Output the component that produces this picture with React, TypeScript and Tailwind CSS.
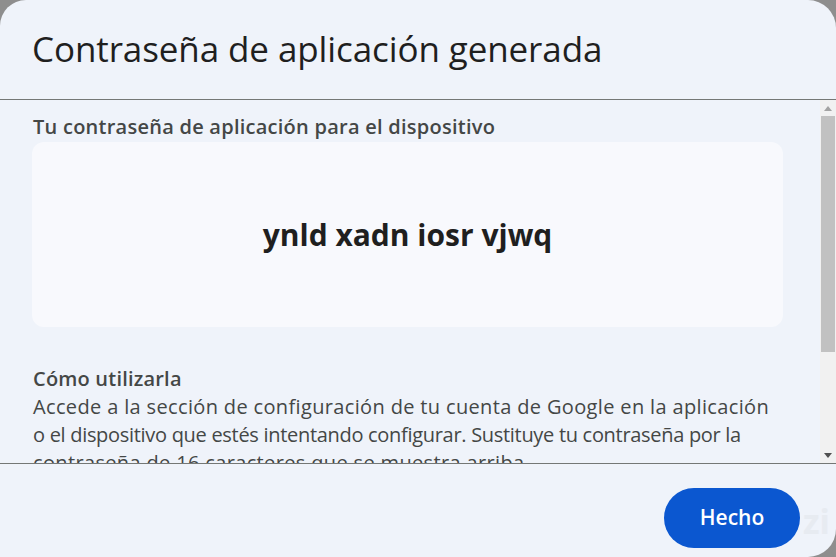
export default function App() {
  return (
    <div className="w-[836px] h-[557px] bg-[#8e8e8e] overflow-hidden">
      <div className="w-full h-full bg-[#eff3fa] rounded-tl-[26px] rounded-tr-[28px] rounded-br-[28px] flex flex-col font-['Open_Sans',sans-serif]">
        <div className="h-[99px] shrink-0 px-[32px] pt-[24px]">
          <h1 className="text-[35px] leading-[50px] text-[#1f1f1f] font-normal tracking-[-0.1px]">
            Contraseña de aplicación generada
          </h1>
        </div>
        <div className="h-px bg-[#747775] shrink-0" />
        <div className="h-[363px] shrink-0 flex">
          <div className="flex-1 overflow-hidden pl-[32px] pr-[37px] pt-[13px]">
            <p className="pl-px text-[20px] leading-[27px] font-semibold text-[#444746] tracking-[0.25px]">
              Tu contraseña de aplicación para el dispositivo
            </p>
            <div className="mt-[2px] h-[185px] rounded-[12px] bg-[#f8f9fd] flex items-center justify-center">
              <span className="text-[30px] font-bold text-[#1f1f1f]">
                ynld xadn iosr vjwq
              </span>
            </div>
            <p className="mt-[38px] pl-px text-[20px] leading-[28px] font-semibold text-[#444746] tracking-[0.2px]">
              Cómo utilizarla
            </p>
            <p className="pl-px text-[20px] leading-[28px] text-[#444746] tracking-[0.35px] whitespace-nowrap">
              Accede a la sección de configuración de tu cuenta de Google en la aplicación
              <br />
              <span className="tracking-[-0.3px]">
                o el dispositivo que estés intentando configurar. Sustituye tu contraseña por la
              </span>
              <br />
              contraseña de 16 caracteres que se muestra arriba.
            </p>
          </div>
          <div className="w-[16px] bg-[#f1f1f1] flex flex-col items-center">
            <div className="h-[16px] flex items-center justify-center">
              <svg width="8" height="5" viewBox="0 0 8 5"><path d="M4 0L8 5H0z" fill="#a3a3a3" /></svg>
            </div>
            <div className="w-[14px] h-[236px] bg-[#c1c1c1]" />
            <div className="flex-1" />
            <div className="h-[16px] flex items-center justify-center">
              <svg width="8" height="5" viewBox="0 0 8 5"><path d="M0 0H8L4 5z" fill="#505050" /></svg>
            </div>
          </div>
        </div>
        <div className="h-px bg-[#747775] shrink-0" />
        <div className="flex-1 flex items-start justify-end pr-[36px] pt-[24px] relative">
          <button className="w-[136px] h-[60px] rounded-full bg-[#0b57d0] text-white text-[21px] font-semibold">
            Hecho
          </button>
          <span className="absolute right-[6px] bottom-[10px] text-[34px] font-bold text-[#e3e6ec] opacity-60 select-none">
            zi
          </span>
        </div>
      </div>
    </div>
  );
}
